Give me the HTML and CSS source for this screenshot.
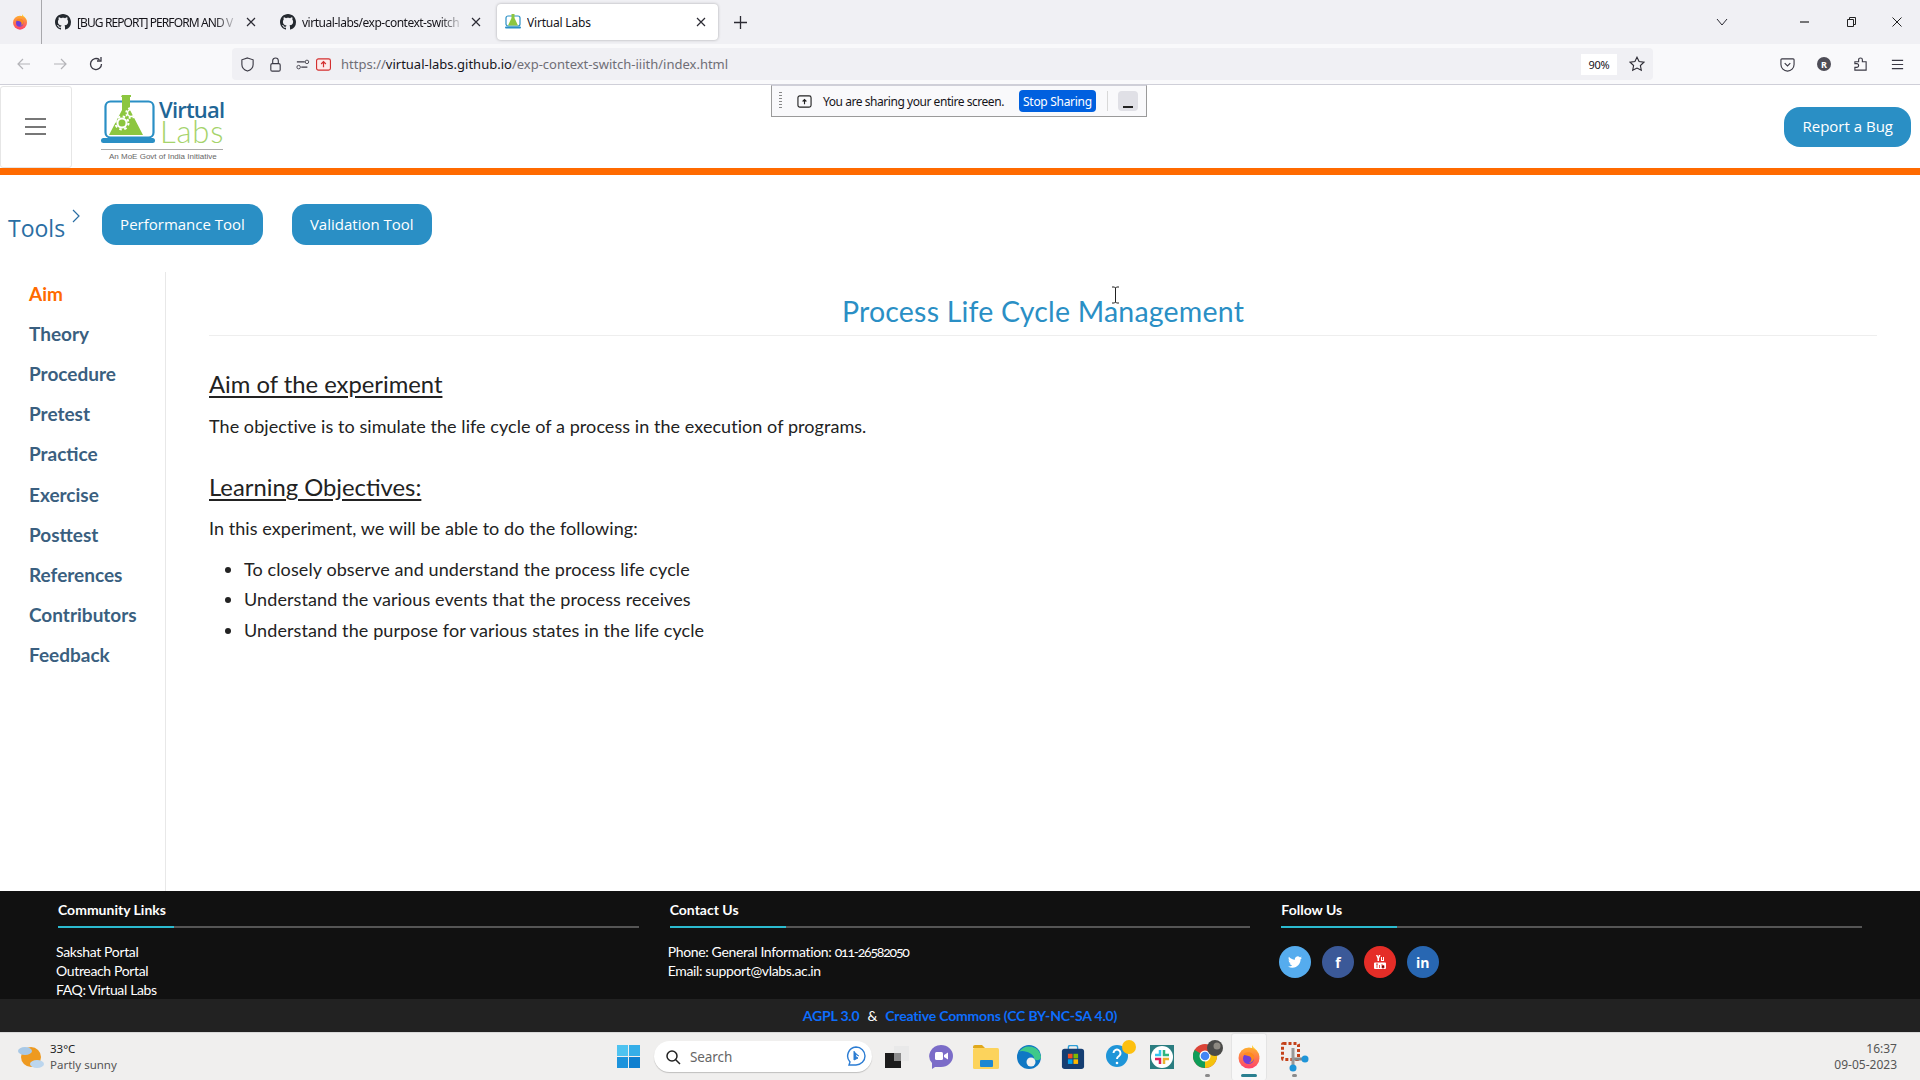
FILE: index.html
```html
<!DOCTYPE html>
<html lang="en">
<head>
    <meta charset="UTF-8">
    <title>Virtual Labs</title>
    <link rel="stylesheet" href="styles.css">
</head>
<body>
    <svg class="defs" width="0" height="0">
        <defs>
            <linearGradient id="ffbody" x1="0" y1="0" x2="0" y2="1">
                <stop offset="0" stop-color="#ffb02e"/>
                <stop offset="1" stop-color="#ff3f6c"/>
            </linearGradient>
        </defs>
        <symbol id="github" viewBox="0 0 16 16">
            <path fill="#24292f" d="M8 0C3.58 0 0 3.58 0 8c0 3.54 2.29 6.53 5.47 7.59.4.07.55-.17.55-.38 0-.19-.01-.82-.01-1.49-2.01.37-2.53-.49-2.69-.94-.09-.23-.48-.94-.82-1.13-.28-.15-.68-.52-.01-.53.63-.01 1.08.58 1.23.82.72 1.21 1.87.87 2.33.66.07-.52.28-.87.51-1.07-1.78-.2-3.64-.89-3.64-3.95 0-.87.31-1.59.82-2.15-.08-.2-.36-1.02.08-2.12 0 0 .67-.21 2.2.82.64-.18 1.32-.27 2-.27.68 0 1.36.09 2 .27 1.53-1.04 2.2-.82 2.2-.82.44 1.1.16 1.92.08 2.12.51.56.82 1.27.82 2.15 0 3.07-1.87 3.75-3.65 3.95.29.25.54.73.54 1.48 0 1.07-.01 1.93-.01 2.2 0 .21.15.46.55.38A8.013 8.013 0 0016 8c0-4.42-3.58-8-8-8z"/>
        </symbol>
        <symbol id="close" viewBox="0 0 12 12">
            <path d="M2 2l8 8M10 2l-8 8" stroke="#2b2a33" stroke-width="1.2" fill="none"/>
        </symbol>
        <symbol id="firefox" viewBox="0 0 24 24">
            <path fill="#ffd23e" d="M15 0c1 3 7 5 7.500 12L15 10z"/>
            <circle cx="12" cy="13" r="10.500" fill="url(#ffbody)"/>
            <circle cx="11.500" cy="13.500" r="5.500" fill="#6f3fd8"/>
            <path fill="#ff8a1e" d="M6 9.500c3-3.500 9-3 11 1 1 3-1 7-5 7.500 3-1.500 3-5 1-6.500-2-1-5-1-7-2z"/>
        </symbol>
        <symbol id="flask" viewBox="0 0 16 16">
            <rect x="1" y="2" width="14" height="10" rx="2" fill="none" stroke="#2a8fc5" stroke-width="1.2"/>
            <path fill="#8cc63f" d="M6.5 0h3v4l3.500 7.500H3L6.500 4z"/>
            <rect y="12.5" width="16" height="2" rx="1" fill="#2a8fc5"/>
        </symbol>
    </svg>

    <div class="tabbar">
        <div class="ff-cell"><svg class="ico16"><use href="#firefox"/></svg></div>
        <div class="tab">
            <svg class="ico16"><use href="#github"/></svg>
            <span class="tab-title fade caps">[BUG REPORT] PERFORM AND V</span>
            <svg class="ico-close"><use href="#close"/></svg>
        </div>
        <div class="tab">
            <svg class="ico16"><use href="#github"/></svg>
            <span class="tab-title fade tight">virtual-labs/exp-context-switch</span>
            <svg class="ico-close"><use href="#close"/></svg>
        </div>
        <div class="tab active">
            <svg class="ico16"><use href="#flask"/></svg>
            <span class="tab-title">Virtual Labs</span>
            <svg class="ico-close"><use href="#close"/></svg>
        </div>
        <svg class="new-tab" viewBox="0 0 12 12"><path d="M6 0v12M0 6h12" stroke="#2b2a33" stroke-width="1.2"/></svg>
        <div class="win-controls">
            <svg class="list-tabs" viewBox="0 0 12 8"><path d="M1 1l5 6 5-6" stroke="#2b2a33" fill="none"/></svg>
            <svg class="win-btn first" viewBox="0 0 10 10"><path d="M0 5h9" stroke="#222" stroke-width="1.2"/></svg>
            <svg class="win-btn" viewBox="0 0 10 10"><path d="M1.500 2.500h6v7h-6zM3.500 2.500V.5h6v7H7.500" stroke="#222" fill="none"/></svg>
            <svg class="win-btn" viewBox="0 0 10 10"><path d="M.5.5l9 9M9.500.5l-9 9" stroke="#222" fill="none"/></svg>
        </div>
    </div>

    <div class="navbar">
        <svg class="nav-ico" viewBox="0 0 16 16"><path d="M14 8H2M7 3L2 8l5 5" stroke="#b4b4b8" fill="none" stroke-width="1.2"/></svg>
        <svg class="nav-ico" viewBox="0 0 16 16"><path d="M2 8h12M9 3l5 5-5 5" stroke="#b4b4b8" fill="none" stroke-width="1.2"/></svg>
        <svg class="nav-ico" viewBox="0 0 16 16"><path d="M13.500 8A5.500 5.500 0 1 1 11.500 3.800M13 1v4H9" stroke="#3a3944" fill="none" stroke-width="1.3"/></svg>
        <div class="urlbar">
            <svg class="url-ico" viewBox="0 0 16 16"><path d="M8 1l6 2v5c0 3.500-3 6-6 7-3-1-6-3.500-6-7V3z" stroke="#3a3944" fill="none" stroke-width="1.2"/></svg>
            <svg class="url-ico" viewBox="0 0 16 16"><rect x="3" y="7" width="10" height="8" rx="1.500" stroke="#3a3944" fill="none" stroke-width="1.2"/><path d="M5 7V4a3 3 0 0 1 6 0v3" stroke="#3a3944" fill="none" stroke-width="1.2"/></svg>
            <svg class="url-ico perm" viewBox="0 0 16 16"><path d="M1 5h9M13 11H6" stroke="#3a3944" stroke-width="1.3"/><circle cx="12.500" cy="5" r="2" stroke="#3a3944" fill="none"/><circle cx="3" cy="11" r="2" stroke="#3a3944" fill="none"/></svg>
            <svg class="url-ico share" viewBox="0 0 16 16"><rect x=".6" y="2" width="14.800" height="12" rx="2" fill="#fdeaea" stroke="#d32f2f" stroke-width="1.2"/><path d="M8 11V5M5.500 7.500L8 5l2.500 2.500" stroke="#d32f2f" fill="none" stroke-width="1.3"/></svg>
            <span class="url"><span class="url-dim">https://</span>virtual-labs.github.io<span class="url-dim">/exp-context-switch-iiith/index.html</span></span>
            <span class="zoom">90%</span>
            <svg class="star" viewBox="0 0 16 16"><path d="M8 1.200l2.100 4.400 4.800.6-3.500 3.300.9 4.800L8 12l-4.300 2.300.9-4.800L1.100 6.200l4.800-.6z" stroke="#2b2a33" fill="none" stroke-width="1.1"/></svg>
        </div>
        <div class="nav-right">
            <svg class="nav-tool" viewBox="0 0 16 16"><path d="M2 2h12a1 1 0 0 1 1 1v5a7 7 0 0 1-14 0V3a1 1 0 0 1 1-1z" stroke="#3a3944" fill="none" stroke-width="1.2"/><path d="M5 6.500l3 3 3-3" stroke="#3a3944" fill="none" stroke-width="1.2"/></svg>
            <span class="avatar">R</span>
            <svg class="nav-tool" viewBox="0 0 16 16"><path d="M2 5h4V3a2 2 0 0 1 4 0v2h4v9H2v-3h2a2 2 0 0 0 0-4H2z" stroke="#3a3944" fill="none" stroke-width="1.2"/></svg>
            <svg class="nav-tool" viewBox="0 0 16 16"><path d="M2 3.500h12M2 8h12M2 12.500h12" stroke="#3a3944" stroke-width="1.300"/></svg>
        </div>
    </div>

    <header class="site-head">
        <div class="burger"><span></span><span></span><span></span></div>
        <svg class="logo" viewBox="100 90 126 70">
            <rect x="105.500" y="99.500" width="48" height="36" rx="5" fill="none" stroke="#2a8fc5" stroke-width="2.200"/>
            <path fill="#8cc63f" d="M122 93h9v2h-1v13l13 25h-34l13-25V95h-1z"/>
            <circle cx="131" cy="111" r="3.500" fill="none" stroke="#fff" stroke-width="1.600"/>
            <circle cx="131" cy="111" r="5" fill="none" stroke="#fff" stroke-width="1.500" stroke-dasharray="2 2"/>
            <circle cx="122" cy="121" r="4.500" fill="none" stroke="#fff" stroke-width="2"/>
            <circle cx="122" cy="121" r="6.500" fill="none" stroke="#fff" stroke-width="2" stroke-dasharray="2.500 2.600"/>
            <rect x="101" y="136" width="54" height="5" rx="2.500" fill="#2a8fc5"/>
            <text x="159" y="116" class="logo-virtual">Virtual</text>
            <text x="160" y="141" class="logo-labs">Labs</text>
            <rect x="101" y="147" width="122" height="1" fill="#aaa"/>
            <text x="109" y="157" class="logo-tag">An MoE Govt of India Initiative</text>
        </svg>
        <a class="btn report">Report a Bug</a>
    </header>
    <div class="orange-bar"></div>

    <div class="tools-row">
        <span class="tools-label">Tools</span>
        <svg class="tools-chevron" viewBox="0 0 8 14"><path d="M1 1l6 6-6 6" stroke="#2a6ea3" fill="none" stroke-width="1.200"/></svg>
        <a class="btn">Performance Tool</a>
        <a class="btn second">Validation Tool</a>
    </div>

    <main class="page-body">
        <nav class="side">
            <a class="current">Aim</a>
            <a>Theory</a>
            <a>Procedure</a>
            <a>Pretest</a>
            <a>Practice</a>
            <a>Exercise</a>
            <a>Posttest</a>
            <a>References</a>
            <a>Contributors</a>
            <a>Feedback</a>
        </nav>
        <section class="content">
            <h1>Process Life Cycle Management</h1>
            <h2>Aim of the experiment</h2>
            <p>The objective is to simulate the life cycle of a process in the execution of programs.</p>
            <h2>Learning Objectives:</h2>
            <p>In this experiment, we will be able to do the following:</p>
            <ul>
                <li>To closely observe and understand the process life cycle</li>
                <li>Understand the various events that the process receives</li>
                <li>Understand the purpose for various states in the life cycle</li>
            </ul>
        </section>
    </main>

    <footer class="foot">
        <div class="foot-col">
            <h3>Community Links</h3>
            <div class="foot-text">
                <div>Sakshat Portal</div>
                <div>Outreach Portal</div>
                <div>FAQ: Virtual Labs</div>
            </div>
        </div>
        <div class="foot-col">
            <h3>Contact Us</h3>
            <div class="foot-text">
                <div>Phone: General Information: <span class="phone">011-26582050</span></div>
                <div>Email: support@vlabs.ac.in</div>
            </div>
        </div>
        <div class="foot-col">
            <h3>Follow Us</h3>
            <div class="social">
                <a class="twitter"><svg viewBox="0 0 24 24"><path fill="#fff" d="M23.953 4.57a10 10 0 01-2.825.775 4.958 4.958 0 002.163-2.723c-.951.555-2.005.959-3.127 1.184a4.92 4.92 0 00-8.384 4.482C7.69 8.095 4.067 6.13 1.64 3.162a4.822 4.822 0 00-.666 2.475c0 1.71.87 3.213 2.188 4.096a4.904 4.904 0 01-2.228-.616v.06a4.923 4.923 0 003.946 4.827 4.996 4.996 0 01-2.212.085 4.936 4.936 0 004.604 3.417 9.867 9.867 0 01-6.102 2.105c-.39 0-.779-.023-1.17-.067a13.995 13.995 0 007.557 2.209c9.053 0 13.998-7.496 13.998-13.985 0-.21 0-.42-.015-.63A9.935 9.935 0 0024 4.59z"/></svg></a>
                <a class="facebook">f</a>
                <a class="youtube"><svg viewBox="0 0 12 14"><path fill="#fff" d="M2 0h1.500l.7 2 .7-2H6.500L5 3.500V6H3.500V3.500zM7 2h1v3h1V2h1v4H7zM1 7.500h10a1 1 0 0 1 1 1V13a1 1 0 0 1-1 1H1a1 1 0 0 1-1-1V8.500a1 1 0 0 1 1-1z"/><path stroke="#e52d27" stroke-width=".8" d="M2 9h2M3 9v4M5.500 10v3M8 9v4M8 10.500h2v2.500H8"/></svg></a>
                <a class="linkedin">in</a>
            </div>
        </div>
    </footer>
    <div class="license"><a>AGPL 3.0</a><span class="amp">&amp;</span><a>Creative Commons (CC BY-NC-SA 4.0)</a></div>

    <div class="taskbar">
        <div class="weather">
            <svg class="weather-ico" viewBox="0 0 26 24">
                <circle cx="13" cy="12" r="10" fill="#ee9a20"/>
                <ellipse cx="7" cy="6" rx="7" ry="4" fill="#a9c9e6"/>
                <ellipse cx="19" cy="19" rx="7" ry="4" fill="#bcd6ee"/>
            </svg>
            <div class="weather-text"><div class="temp">33°C</div><div>Partly sunny</div></div>
        </div>
        <div class="task-icons">
            <svg class="t-start" viewBox="0 0 23 23"><rect width="11" height="11" fill="#4fc3f0"/><rect x="12" width="11" height="11" fill="#35aee8"/><rect y="12" width="11" height="11" fill="#1c93dc"/><rect x="12" y="12" width="11" height="11" fill="#0f7fcf"/></svg>
            <div class="t-search">
                <svg class="t-glass" viewBox="0 0 16 16"><circle cx="7" cy="7" r="5" stroke="#222" fill="none" stroke-width="1.500"/><path d="M10.500 10.500L15 15" stroke="#222" stroke-width="1.500"/></svg>
                <span class="t-search-text">Search</span>
                <svg class="t-bing" viewBox="0 0 20 22"><path d="M10 1a9 9 0 0 1 0 18H3l1-3a9 9 0 0 1 6-15z" fill="#fff" stroke="#2b7cd3" stroke-width="1.400"/><path d="M8 5v9l4-2-2-1-1-3 4 2" fill="#2b7cd3" stroke="#2b7cd3"/></svg>
            </div>
            <svg class="t-ico view" viewBox="0 0 24 22"><rect x="9" y="0" width="15" height="15" fill="#e9e9e9"/><rect x="0" y="7" width="16" height="15" fill="#1c1c1c"/><rect x="9" y="7" width="7" height="8" fill="#8c8c8c"/></svg>
            <svg class="t-ico meet" viewBox="0 0 24 24"><path d="M12 0a12 11 0 0 1 0 22H6l-3 2v-6A12 11 0 0 1 12 0z" fill="#7b6cc8"/><rect x="6" y="7" width="8" height="8" rx="1.500" fill="#fff"/><path d="M15 10l4-2.500v7L15 12z" fill="#fff"/></svg>
            <svg class="t-ico folder" viewBox="0 0 26 24"><path d="M0 2a2 2 0 0 1 2-2h7l3 3H0z" fill="#e0a81c"/><rect y="3" width="26" height="21" rx="1.500" fill="#fcd35c"/><rect x="7" y="15" width="13" height="7" rx="1" fill="#1d88d2"/></svg>
            <svg class="t-ico edge" viewBox="0 0 24 24"><circle cx="12" cy="12" r="12" fill="#0f78c4"/><path d="M2 7a12 12 0 0 1 22 5c0 4-7 4-7 1 0-4-11-9-15-6z" fill="#3fc98a"/><circle cx="14" cy="17" r="4.500" fill="#f0f0f0"/></svg>
            <svg class="t-ico store" viewBox="0 0 24 26"><path d="M7 5V2.500a2 2 0 0 1 2-2h6a2 2 0 0 1 2 2V5" fill="none" stroke="#2f9fd8" stroke-width="1.500"/><rect y="4" width="24" height="22" rx="3" fill="#153e72"/><rect x="6.500" y="9.500" width="5" height="5" fill="#f25022"/><rect x="12.500" y="9.500" width="5" height="5" fill="#7fba00"/><rect x="6.500" y="15.500" width="5" height="5" fill="#00a4ef"/><rect x="12.500" y="15.500" width="5" height="5" fill="#ffb900"/></svg>
            <span class="t-help">
                <svg class="t-ico" viewBox="0 0 30 28"><circle cx="11" cy="16" r="11" fill="#1f95d8"/><circle cx="23" cy="7" r="7" fill="#fdc010"/><path d="M7.500 13a3.500 3.500 0 1 1 5.500 3c-1.500 1-2 1.500-2 3" stroke="#fff" stroke-width="2" fill="none"/><circle cx="11" cy="23" r="1.300" fill="#fff"/></svg>
            </span>
            <svg class="t-ico slack" viewBox="0 0 24 24"><rect width="24" height="24" fill="#2b7d80"/><circle cx="12" cy="12" r="11" fill="#fff"/><path d="M10 5v5H5" stroke="#36c5f0" stroke-width="2.500" fill="none"/><path d="M19 10h-5V5" stroke="#2eb67d" stroke-width="2.500" fill="none"/><path d="M14 19v-5h5" stroke="#ecb22e" stroke-width="2.500" fill="none"/><path d="M5 14h5v5" stroke="#e01e5a" stroke-width="2.500" fill="none"/></svg>
            <span class="t-app">
                <svg class="t-ico chrome" viewBox="0 0 30 28">
                    <circle cx="12" cy="16" r="12" fill="#db4437"/>
                    <path d="M12 16l10.400-6A12 12 0 0 1 12 28z" fill="#f4c20d"/>
                    <path d="M12 16L1.600 22A12 12 0 0 0 12 28zM12 16L1.600 10A12 12 0 0 0 1.600 22z" fill="#0f9d58"/>
                    <circle cx="12" cy="16" r="5.500" fill="#fff"/><circle cx="12" cy="16" r="4.300" fill="#4285f4"/>
                    <circle cx="22" cy="8" r="8" fill="#4a4a48"/><circle cx="24" cy="6" r="3.500" fill="#8e8a82"/>
                </svg>
                <i class="t-dot"></i>
            </span>
            <span class="t-app ff-running">
                <svg class="t-ico"><use href="#firefox"/></svg>
                <i class="t-active"></i>
            </span>
            <span class="t-app">
                <svg class="t-ico snip" viewBox="0 0 28 30"><rect x="1.500" y="1.500" width="16" height="16" rx="1" stroke="#c4421a" stroke-width="3" stroke-dasharray="3 2" fill="none"/><path d="M12 17h13" stroke="#888" stroke-width="3"/><path d="M12 6v18" stroke="#999" stroke-width="3"/><circle cx="24" cy="17" r="3.500" fill="#1f95d8"/><circle cx="12" cy="26" r="3.500" fill="#1f95d8"/></svg>
                <i class="t-dot"></i>
            </span>
        </div>
        <div class="clock"><div>16:37</div><div>09-05-2023</div></div>
    </div>

    <div class="share-bar">
        <div class="grip"></div>
        <svg class="share-ico" viewBox="0 0 16 16"><rect x="1" y="2" width="14" height="12" rx="2" fill="none" stroke="#222" stroke-width="1.200"/><path d="M8 11V6M6 8l2-2 2 2" stroke="#222" fill="none" stroke-width="1.200"/></svg>
        <span class="share-text">You are sharing your entire screen.</span>
        <span class="stop">Stop Sharing</span>
        <span class="share-sep"></span>
        <span class="share-min"></span>
    </div>
    <svg class="ibeam" viewBox="0 0 9 18"><path d="M1 1h2.500l1 1 1-1H8M4.500 2v14M1 17h2.500l1-1 1 1H8" stroke="#222" fill="none"/></svg>
</body>
</html>
```

FILE: styles.css
```css
* {
    box-sizing: border-box;
}
html, body {
    height: 100%;
}
body {
    margin: 0;
    display: flex;
    flex-direction: column;
    height: 1080px;
    overflow: hidden;
    position: relative;
    background: white;
    font-family: "Lato", "Liberation Sans", sans-serif;
}
.defs {
    position: absolute;
}
h1, h2, h3, p, ul {
    margin: 0;
    padding: 0;
}

/* browser chrome */
.tabbar {
    height: 44px;
    flex: none;
    display: flex;
    align-items: center;
    background: #f0f0f4;
    font-family: "Noto Sans", sans-serif;
    font-size: 12px;
    color: #15141a;
}
.ff-cell {
    width: 42px;
    height: 44px;
    padding-left: 12px;
    display: flex;
    align-items: center;
    border-right: 1px solid #a8a8ac;
    margin-right: 5px;
}
.ico16 {
    width: 16px;
    height: 16px;
    flex: none;
}
.tab {
    width: 221px;
    height: 36px;
    margin-right: 4px;
    padding: 0 11px 0 8px;
    display: flex;
    align-items: center;
    gap: 6px;
    border-radius: 4px;
}
.tab.active {
    background: white;
    box-shadow: 0 0 3px rgba(0,0,0,0.3);
}
.tab-title {
    flex: 1;
    overflow: hidden;
    white-space: nowrap;
    letter-spacing: -0.2px;
}
.tab-title.fade {
    -webkit-mask-image: linear-gradient(to right, black 85%, transparent);
    mask-image: linear-gradient(to right, black 85%, transparent);
}
.tab-title.caps {
    letter-spacing: -0.9px;
}
.tab-title.tight {
    letter-spacing: -0.5px;
}
.ico-close {
    width: 12px;
    height: 12px;
    flex: none;
    margin-left: 0;
}
.new-tab {
    width: 13px;
    height: 13px;
    margin-left: 12px;
}
.win-controls {
    margin-left: auto;
    display: flex;
    align-items: center;
}
.list-tabs {
    width: 12px;
    height: 8px;
    margin-right: 72px;
}
.win-btn {
    width: 10px;
    height: 10px;
    margin-right: 36px;
}
.win-btn:last-child {
    margin-right: 18px;
}
.navbar {
    height: 41px;
    flex: none;
    display: flex;
    align-items: center;
    background: #f9f9fb;
    border-bottom: 1px solid #cfcfd8;
    padding-left: 16px;
}
.nav-ico {
    width: 16px;
    height: 16px;
    margin-right: 20px;
}
.urlbar {
    width: 1421px;
    height: 32px;
    margin-left: 108px;
    padding: 0 6px 0 0;
    display: flex;
    align-items: center;
    background: #f0f0f4;
    border-radius: 4px;
}
.url-ico {
    width: 15px;
    height: 15px;
    margin-left: 8px;
    margin-right: 5px;
    flex: none;
}
.url-ico.perm {
    margin-right: 0;
    width: 14px;
}
.url-ico.share {
    margin-left: 6px;
}
.url {
    margin-left: 5px;
    font-family: "Noto Sans", sans-serif;
    font-size: 13px;
    color: #15141a;
}
.url-dim {
    color: #6f6e76;
}
.zoom {
    margin-left: auto;
    width: 36px;
    height: 21px;
    background: white;
    font-family: "Noto Sans", sans-serif;
    font-size: 11px;
    letter-spacing: -0.3px;
    color: #15141a;
    display: flex;
    align-items: center;
    justify-content: center;
}
.star {
    width: 16px;
    height: 16px;
    margin-left: 12px;
    margin-right: 2px;
}
.nav-right {
    display: flex;
    align-items: center;
    margin-left: 127px;
    gap: 22px;
}
.nav-tool {
    width: 15px;
    height: 15px;
}
.avatar {
    width: 14px;
    height: 14px;
    border-radius: 50%;
    background: #4e4d57;
    color: white;
    font-family: "Noto Sans", sans-serif;
    font-size: 9px;
    font-weight: 700;
    display: flex;
    align-items: center;
    justify-content: center;
}

/* site header */
.site-head {
    height: 83px;
    flex: none;
    display: flex;
    align-items: center;
    background: white;
    padding-right: 9px;
}
.burger {
    width: 72px;
    height: 82px;
    border: 1px solid #e6e6e6;
    border-radius: 3px;
    display: flex;
    flex-direction: column;
    justify-content: center;
    gap: 5.5px;
    padding-left: 24px;
}
.burger span {
    width: 21px;
    height: 2px;
    background: #777;
}
.logo {
    width: 126px;
    height: 70px;
    margin-left: 28px;
}
.logo-virtual {
    font-family: "Open Sans", sans-serif;
    font-size: 22px;
    font-weight: 600;
    fill: #1f6696;
    letter-spacing: -0.8px;
}
.logo-labs {
    font-family: "Lato", sans-serif;
    font-weight: 300;
    font-size: 31px;
    fill: #a5d36b;
    letter-spacing: 0.8px;
}
.logo-tag {
    font-family: "Liberation Sans", sans-serif;
    font-size: 8px;
    fill: #666;
}
.btn {
    display: flex;
    align-items: center;
    height: 41px;
    padding: 0 18px 1px;
    background: #2a8fc5;
    color: white;
    border-radius: 14px;
    font-family: "Open Sans", sans-serif;
    font-size: 15px;
}
.btn.report {
    margin-left: auto;
    height: 40px;
    border-radius: 16px;
}
.btn.second {
    margin-left: 29px;
}
.orange-bar {
    height: 7px;
    flex: none;
    background: #ff6a00;
}
.tools-row {
    height: 97px;
    flex: none;
    display: flex;
    align-items: flex-start;
    padding: 29px 0 0 8px;
}
.tools-label {
    font-family: "Open Sans", sans-serif;
    font-size: 23px;
    color: #2a6ea3;
    margin-top: 8px;
}
.tools-chevron {
    width: 8px;
    height: 14px;
    margin: 5px 22px 0 7px;
}

/* page */
.page-body {
    flex: 1;
    display: flex;
    min-height: 0;
}
.side {
    width: 166px;
    flex: none;
    border-right: 1px solid #e8e8e8;
    padding: 1.5px 0 0 29px;
}
.side a {
    display: flex;
    align-items: center;
    height: 40.1px;
    font-size: 19px;
    font-weight: 700;
    color: #3a5f80;
}
.side a.current {
    color: #ff6a00;
}
.content {
    flex: 1;
    padding: 20px 43px 0;
    color: #222;
}
.content h1 {
    height: 44px;
    line-height: 38px;
    text-align: center;
    font-size: 28.5px;
    letter-spacing: 0.2px;
    font-weight: 400;
    color: #2a8fc5;
    border-bottom: 1px solid #eee;
    margin-bottom: 33px;
}
.content h2 {
    line-height: 30px;
    font-size: 23.8px;
    font-weight: 400;
    text-decoration: underline;
    text-underline-offset: 3px;
    margin-bottom: 14.5px;
    color: #222;
}
.content p {
    line-height: 24px;
    font-size: 18px;
    letter-spacing: 0.06px;
    margin-bottom: 34.5px;
}
.content p:last-of-type {
    margin-top: -1px;
    margin-bottom: 14px;
}
.content ul {
    padding-left: 35px;
}
.content li {
    line-height: 30.5px;
    font-size: 18px;
    letter-spacing: 0.1px;
}

/* footer */
.foot {
    height: 108px;
    flex: none;
    display: flex;
    overflow: hidden;
    gap: 31px;
    padding: 0 58px;
    background: #111;
    color: white;
}
.foot-col {
    width: 581px;
}
.foot-col h3 {
    height: 37px;
    padding-top: 9px;
    line-height: 20px;
    font-size: 14px;
    font-weight: 700;
    border-bottom: 2px solid #555;
    position: relative;
}
.foot-col h3::after {
    content: "";
    position: absolute;
    left: 0;
    bottom: -2px;
    width: 116px;
    height: 2px;
    background: #2bbbd0;
}
.foot-text {
    margin: 14px 0 0 -2px;
    font-size: 14px;
    line-height: 19px;
    letter-spacing: -0.35px;
}
.phone {
    font-variant-numeric: oldstyle-nums;
    letter-spacing: -1.2px;
}
.social {
    display: flex;
    gap: 10.5px;
    margin: 18px 0 0 -2px;
}
.social a {
    width: 32px;
    height: 32px;
    border-radius: 50%;
    display: flex;
    align-items: center;
    justify-content: center;
    font-family: "Open Sans", sans-serif;
    font-size: 14px;
    font-weight: 700;
    color: white;
}
.social svg {
    width: 14px;
    height: 14px;
}
.twitter {
    background: #55acee;
}
.facebook {
    background: #3b5998;
}
.youtube {
    background: #e52d27;
}
.linkedin {
    background: #2867b2;
}
.license {
    height: 33px;
    flex: none;
    display: flex;
    align-items: center;
    justify-content: center;
    gap: 8px;
    background: #222;
    font-size: 14px;
    font-weight: 700;
    letter-spacing: -0.18px;
}
.license a {
    color: #0d6efd;
}
.amp {
    color: white;
    font-weight: 400;
}

/* windows taskbar */
.taskbar {
    height: 48px;
    flex: none;
    display: flex;
    align-items: center;
    background: #f0efee;
    border-top: 1px solid #d9d9d9;
    font-family: "Noto Sans", sans-serif;
    font-size: 11.5px;
    color: #333;
    padding: 0 23px 0 18px;
}
.weather {
    width: 599px;
    display: flex;
    align-items: center;
    gap: 6px;
}
.weather-ico {
    width: 26px;
    height: 24px;
}
.weather-text {
    line-height: 16px;
    color: #555;
}
.temp {
    color: #222;
}
.task-icons {
    display: flex;
    align-items: center;
    height: 47px;
}
.t-start {
    width: 23px;
    height: 23px;
}
.t-search {
    width: 218px;
    height: 31px;
    margin: 0 13px 0 14px;
    padding: 0 6px 0 11px;
    display: flex;
    align-items: center;
    background: white;
    border-radius: 16px;
    box-shadow: 0 1px 1px rgba(0,0,0,0.2);
    font-size: 13.5px;
    color: #666;
}
.t-glass {
    width: 16px;
    height: 16px;
    margin-right: 9px;
}
.t-bing {
    width: 20px;
    height: 22px;
    margin-left: auto;
}
.t-search-text {
    letter-spacing: -0.1px;
}
.t-ico {
    width: 24px;
    height: 24px;
    display: block;
}
.view {
    margin-right: 20px;
}
.meet {
    margin-right: 20px;
}
.folder {
    width: 26px;
    margin-right: 18px;
}
.edge {
    margin-right: 20px;
}
.store {
    margin-right: 21px;
}
.t-help {
    margin-right: 14px;
}
.t-help svg {
    width: 30px;
    height: 28px;
    margin-top: -6px;
}
.slack {
    margin-right: 19px;
}
.t-app {
    position: relative;
    height: 47px;
    display: flex;
    align-items: center;
    justify-content: center;
}
.chrome {
    width: 30px;
    height: 28px;
    margin-top: -6px;
}
.t-app:has(.chrome) {
    margin-right: 8px;
}
.ff-running {
    width: 36px;
    background: #f8f8f8;
    border: 1px solid #e4e4e4;
    border-bottom: none;
    border-radius: 3px;
    margin-right: 14px;
}
.snip {
    width: 28px;
    height: 30px;
}
.t-dot {
    position: absolute;
    bottom: 3px;
    left: 50%;
    width: 5px;
    height: 3px;
    margin-left: -3px;
    border-radius: 2px;
    background: #8a8a8a;
}
.t-active {
    position: absolute;
    bottom: 3px;
    left: 50%;
    width: 16px;
    height: 3px;
    margin-left: -8px;
    border-radius: 2px;
    background: #2a8090;
}
.clock {
    margin-left: auto;
    text-align: right;
    line-height: 16px;
    font-size: 12px;
    color: #555;
}

/* overlays */
.share-bar {
    position: absolute;
    left: 771px;
    top: 85px;
    width: 376px;
    height: 32px;
    display: flex;
    align-items: center;
    background: #f9f9fb;
    border: 1px solid #9a9a9a;
    border-top-color: #cfcfd8;
    font-family: "Noto Sans", sans-serif;
    font-size: 12px;
    color: #15141a;
}
.grip {
    width: 3px;
    height: 18px;
    margin-left: 7px;
    background: repeating-linear-gradient(#888 0 1px, transparent 1px 3px);
}
.share-ico {
    width: 15px;
    height: 15px;
    margin-left: 15px;
}
.share-text {
    margin-left: 11px;
    letter-spacing: -0.45px;
}
.stop {
    margin-left: 15px;
    width: 77px;
    height: 22px;
    background: #0060df;
    color: white;
    border-radius: 4px;
    display: flex;
    align-items: center;
    justify-content: center;
    letter-spacing: -0.3px;
}
.share-sep {
    width: 1px;
    height: 20px;
    margin-left: 11px;
    background: #d8d8d8;
}
.share-min {
    width: 20px;
    height: 20px;
    margin-left: 10px;
    border-radius: 4px;
    background: #e0e0e6 linear-gradient(#222, #222) center 15px / 10px 2px no-repeat;
}
.ibeam {
    position: absolute;
    left: 1111px;
    top: 286px;
    width: 9px;
    height: 18px;
}
```
